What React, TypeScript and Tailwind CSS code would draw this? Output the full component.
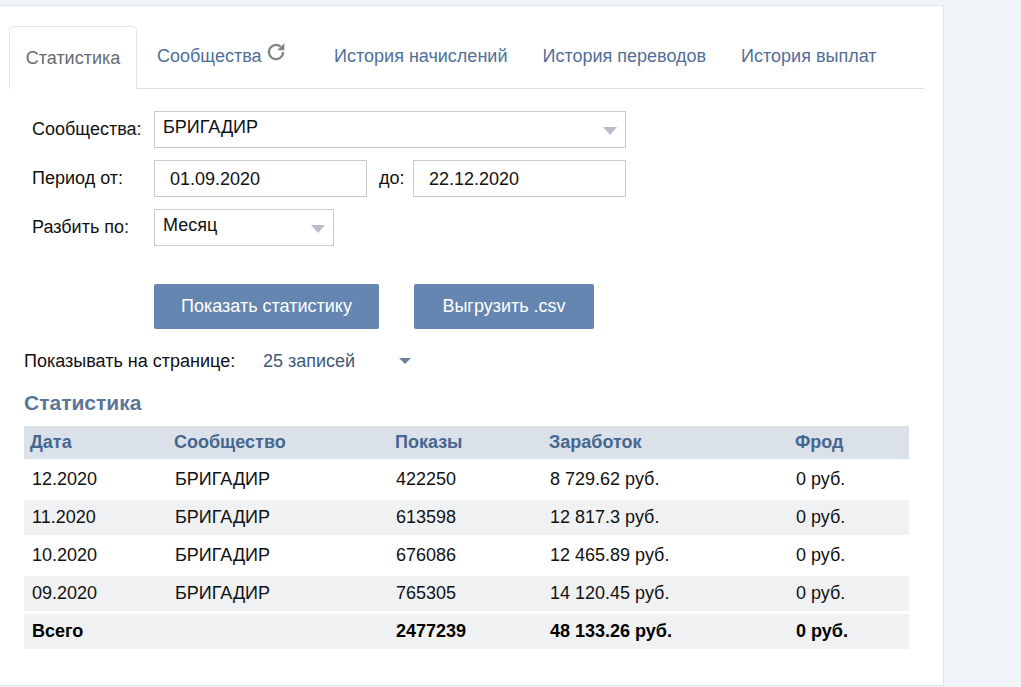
import React from 'react';

const rows = [
  ['12.2020', 'БРИГАДИР', '422250', '8 729.62 руб.', '0 руб.'],
  ['11.2020', 'БРИГАДИР', '613598', '12 817.3 руб.', '0 руб.'],
  ['10.2020', 'БРИГАДИР', '676086', '12 465.89 руб.', '0 руб.'],
  ['09.2020', 'БРИГАДИР', '765305', '14 120.45 руб.', '0 руб.'],
];

const headers = ['Дата', 'Сообщество', 'Показы', 'Заработок', 'Фрод'];
const tabs = ['История начислений', 'История переводов', 'История выплат'];
const gridCols = 'grid grid-cols-[144px_221px_154px_246px_120px] items-center';

const Caret = () => <span className="mt-[6px] w-0 h-0 border-x-[7px] border-x-transparent border-t-[8px] border-t-[#b9bdc9]" />;

const Refresh = () => (
  <svg viewBox="0 0 24 24" className="w-[20px] h-[20px] ml-[4px] -mt-[9px]" fill="none" stroke="#7f8489" strokeWidth="2.8">
    <path d="M20.5 12a8.5 8.5 0 1 1-2.8-6.3" />
    <path d="M22 1.5v8.5h-8.5z" fill="#7f8489" stroke="none" />
  </svg>
);

const App = () => {
  return (
    <div className="min-h-[687px] bg-[#f0f3f7] pt-[5px] font-['Liberation_Sans',Arial,sans-serif] text-[18px] text-[#111]">
      <div className="w-[944px] h-[681px] bg-white border-t border-r border-b border-[#e1e5ea] pl-[9px] pt-5">
        {/* Tabs */}
        <div className="w-[915px] h-[63px] flex border-b border-[#dcdfe3]">
          <div className="w-[128px] h-[63px] bg-white border border-[#e3e5e8] border-b-white rounded-t-[5px] flex items-center justify-center pt-[2px] text-[#666b70]">
            Статистика
          </div>
          <div className="flex items-center pl-[20px] text-[#4f6f99] pb-[1px]">
            Сообщества
            <Refresh />
          </div>
          <div className="flex items-center gap-[35px] ml-[48.5px] text-[#4f6f99] pb-[1px]">
            {tabs.map(t => <span key={t}>{t}</span>)}
          </div>
        </div>

        {/* Filters */}
        <div className="pl-[23px] pt-[22px] flex flex-col gap-[12px]">
          <div className="flex items-center">
            <span className="w-[122px]">Сообщества:</span>
            <div className="w-[472px] h-[37px] border border-[#c8cacc] flex items-center justify-between pl-2 pr-[8px] pb-[4px]">
              <span>БРИГАДИР</span>
              <Caret />
            </div>
          </div>
          <div className="flex items-center">
            <span className="w-[122px]">Период от:</span>
            <div className="w-[213px] h-[37px] border border-[#c8cacc] flex items-center pl-[15px] pt-[2px]">01.09.2020</div>
            <span className="ml-3 w-[34px]">до:</span>
            <div className="w-[213px] h-[37px] border border-[#c8cacc] flex items-center pl-[15px] pt-[2px]">22.12.2020</div>
          </div>
          <div className="flex items-center">
            <span className="w-[122px]">Разбить по:</span>
            <div className="w-[180px] h-[37px] border border-[#c8cacc] flex items-center justify-between pl-2 pr-[8px] pb-[4px]">
              <span>Месяц</span>
              <Caret />
            </div>
          </div>
        </div>

        {/* Buttons */}
        <div className="flex gap-[35px] pl-[145px] mt-[38px]">
          <button className="w-[225px] h-[45px] bg-[#6586b1] rounded-[2px] text-white">Показать статистику</button>
          <button className="w-[180px] h-[45px] bg-[#6586b1] rounded-[2px] text-white">Выгрузить .csv</button>
        </div>

        {/* Page size */}
        <div className="pl-[15px] mt-[22px] flex items-center h-[20px]">
          <span className="w-[239px]">Показывать на странице:</span>
          <span className="w-[136px] text-[#3f5a78]">25 записей</span>
          <span className="w-0 h-0 border-x-[6px] border-x-transparent border-t-[6px] border-t-[#6f8199]" />
        </div>

        {/* Table */}
        <div className="pl-[15px] mt-[21px]">
          <h2 className="text-[21px] leading-[22px] font-bold text-[#5b7697]">Статистика</h2>
          <div className={`${gridCols} h-[33px] mt-[12px] w-[885px] bg-[#dae1e9] font-bold text-[#47678f]`}>
            {headers.map(h => <div key={h} className="pl-[6px]">{h}</div>)}
          </div>
          <div className="flex flex-col gap-[3px] mt-[3px] w-[885px]">
            {rows.map((r, i) => (
              <div key={r[0]} className={`${gridCols} h-[35px] ${i % 2 === 1 ? 'bg-[#f0f1f3]' : 'bg-white'}`}>
                {r.map((c, j) => <div key={j} className={j === 0 ? 'pl-2' : 'pl-[7px]'}>{c}</div>)}
              </div>
            ))}
            <div className={`${gridCols} h-[35px] bg-[#f0f1f3] font-bold text-black`}>
              <div className="pl-2">Всего</div>
              <div />
              <div className="pl-[7px]">2477239</div>
              <div className="pl-[7px]">48 133.26 руб.</div>
              <div className="pl-[7px]">0 руб.</div>
            </div>
          </div>
        </div>
      </div>
    </div>
  );
};

export default App;
